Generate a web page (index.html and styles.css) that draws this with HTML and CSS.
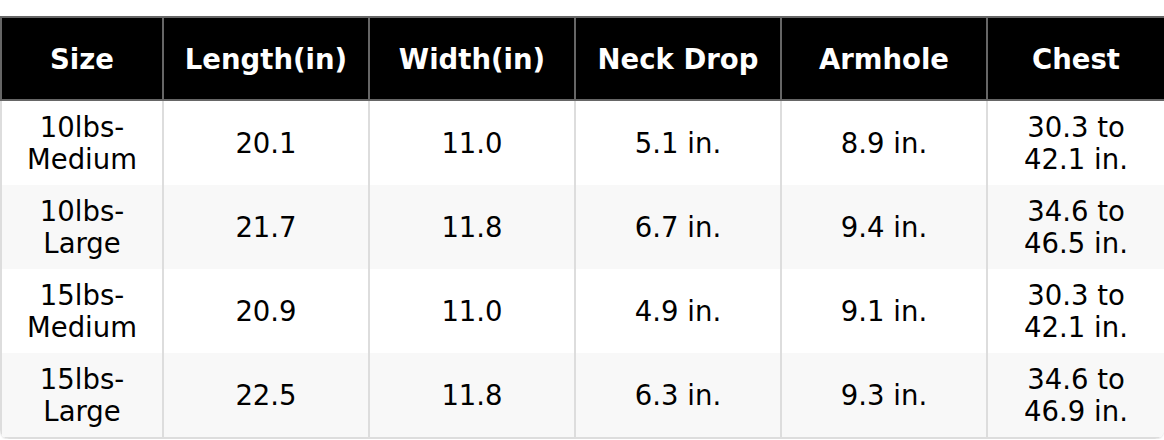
FILE: index.html
```html
<!DOCTYPE html>
<html>
<head>
<meta charset="utf-8">
<link rel="stylesheet" href="styles.css">
</head>
<body>
<div class="wrap">
<table class="size-table">
<colgroup>
<col class="c-size"><col class="c-std"><col class="c-std"><col class="c-std"><col class="c-std"><col class="c-chest">
</colgroup>
<thead>
<tr><th>Size</th><th>Length(in)</th><th>Width(in)</th><th>Neck Drop</th><th>Armhole</th><th>Chest</th></tr>
</thead>
<tbody>
<tr><td>10lbs-Medium</td><td>20.1</td><td>11.0</td><td>5.1 in.</td><td>8.9 in.</td><td>30.3 to 42.1 in.</td></tr>
<tr><td>10lbs-Large</td><td>21.7</td><td>11.8</td><td>6.7 in.</td><td>9.4 in.</td><td>34.6 to 46.5 in.</td></tr>
<tr><td>15lbs-Medium</td><td>20.9</td><td>11.0</td><td>4.9 in.</td><td>9.1 in.</td><td>30.3 to 42.1 in.</td></tr>
<tr><td>15lbs-Large</td><td>22.5</td><td>11.8</td><td>6.3 in.</td><td>9.3 in.</td><td>34.6 to 46.9 in.</td></tr>
</tbody>
</table>
</div>
</body>
</html>
```
FILE: styles.css
```css
html, body {
  margin: 0;
  padding: 0;
  background: #fff;
}
body {
  font-family: "DejaVu Sans", sans-serif;
  font-size: 27.5px;
  line-height: 32px;
  color: #000;
}
.wrap {
  margin-top: 16px;
  width: 1164px;
  border-radius: 0 0 9px 9px;
  overflow: hidden;
  box-shadow: 0 1px 2px rgba(0,0,0,0.12);
}
.size-table {
  width: 100%;
  border-collapse: collapse;
  table-layout: fixed;
}
.c-size { width: 162px; }
.c-std { width: 206px; }
.c-chest { width: 178px; }
.size-table th {
  background: #000;
  color: #fff;
  font-weight: bold;
  border: 2px solid #666;
  padding: 25px 8px 24px;
  text-align: center;
  vertical-align: middle;
}
.size-table td {
  border-left: 2px solid #ddd;
  border-right: 2px solid #ddd;
  padding: 10px 8px;
  text-align: center;
  vertical-align: middle;
  background: #fff;
}
.size-table tbody tr:last-child td {
  border-bottom: 2px solid #ddd;
}
.size-table tbody tr:nth-child(even) td {
  background: #f8f8f8;
}
```
